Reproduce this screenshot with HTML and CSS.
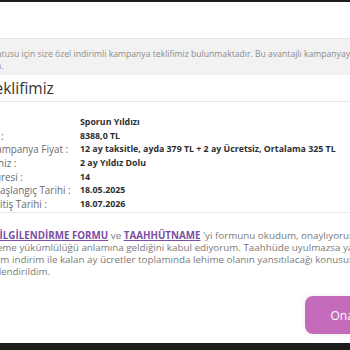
FILE: index.html
```html
<!doctype html>
<html lang="tr">
<head>
    <meta charset="UTF-8">
    <meta name="viewport" content="width=device-width, initial-scale=1.0">
    <link rel="stylesheet" href="styles.css">
    <title>Teklif</title>
</head>
<body>
    <div class="modal">
        <div class="modal-head"></div>
        <div class="notice">
            Üyelik statusu için size özel indirimli kampanya teklifimiz bulunmaktadır. Bu avantajlı kampanyayı kaçırmamak için hemen<br>onaylayın.
        </div>
        <h2 class="title">Özel Teklifimiz</h2>
        <div class="details">
            <div class="row"><span class="label">Paket :</span><span class="value">Sporun Yıldızı</span></div>
            <div class="row"><span class="label">Liste Fiyat :</span><span class="value">8388,0 TL</span></div>
            <div class="row"><span class="label">Toplam Kampanya Fiyat :</span><span class="value">12 ay taksitle, ayda 379 TL + 2 ay Ücretsiz, Ortalama 325 TL</span></div>
            <div class="row"><span class="label">Ek Hediyeniz :</span><span class="value">2 ay Yıldız Dolu</span></div>
            <div class="row"><span class="label">Ödeme Süresi :</span><span class="value">14</span></div>
            <div class="row"><span class="label">Taahhüt Başlangıç Tarihi :</span><span class="value">18.05.2025</span></div>
            <div class="row"><span class="label">Taahhüt Bitiş Tarihi :</span><span class="value">18.07.2026</span></div>
        </div>
        <p class="consent">
            <span class="check"></span><a href="#">BİLGİLENDİRME FORMU</a> ve <a href="#">TAAHHÜTNAME</a> 'yi formunu okudum, onaylıyorum.<br>
            Bu bir ödeme yükümlülüğü anlamına geldiğini kabul ediyorum. Taahhüde uyulmazsa yararlanarak<br>
            aldığım tüm indirim ile kalan ay ücretler toplamında lehime olanın yansıtılacağı konusunda<br>
            yazılı bilgilendirildim.
        </p>
        <div class="actions">
            <button class="btn">Onayla</button>
        </div>
    </div>
</body>
</html>
```

FILE: styles.css
```css
body {
    margin: 0;
    padding-top: 2px;
    background-color: #1d1d1d;
    font-family: "Open Sans", "Liberation Sans", sans-serif;
    overflow: hidden;
    height: 350px;
}

.modal {
    background-color: #fff;
    width: 480px;
    margin-left: -65px;
    padding-bottom: 9px;
}

.modal-head {
    height: 36px;
    border-bottom: 1px solid #e6e6e6;
}

.notice {
    background-color: #f2f2f2;
    color: #8c8c8c;
    font-size: 8.65px;
    line-height: 12px;
    padding: 9px 20px 3px 28px;
    white-space: nowrap;
}

.title {
    margin: 0;
    padding: 0 15px;
    font-size: 15.5px;
    font-weight: 500;
    line-height: 26px;
    color: #333;
    border-bottom: 1px solid #e6e6e6;
}

.details {
    padding: 14px 20px 0 18px;
    border-bottom: 1px solid #ececec;
}

.row {
    display: grid;
    grid-template-columns: 127px 1fr;
    height: 13.7px;
    line-height: 13.7px;
    white-space: nowrap;
}

.label {
    color: #6b6b6b;
    font-size: 9.9px;
}

.value {
    color: #2e2e2e;
    font-size: 8.8px;
    font-weight: 700;
}

.consent {
    margin: 0;
    padding: 17px 20px 0;
    font-size: 9.8px;
    line-height: 12px;
    color: #7a7a7a;
    white-space: nowrap;
}

.consent a {
    color: #7b4fa3;
    font-weight: 700;
}

.check {
    display: inline-block;
    width: 10px;
    height: 10px;
    margin-right: 26px;
    border: 1px solid #ccc;
    vertical-align: middle;
}

.actions {
    display: flex;
    justify-content: flex-end;
    padding: 18px 20px 0;
}

.btn {
    width: 90px;
    height: 38px;
    border: none;
    border-radius: 8px;
    background-color: #c46cbb;
    color: #fff;
    font-family: inherit;
    font-size: 12px;
    box-shadow: 0 0 6px rgba(0, 0, 0, 0.08);
}
```
